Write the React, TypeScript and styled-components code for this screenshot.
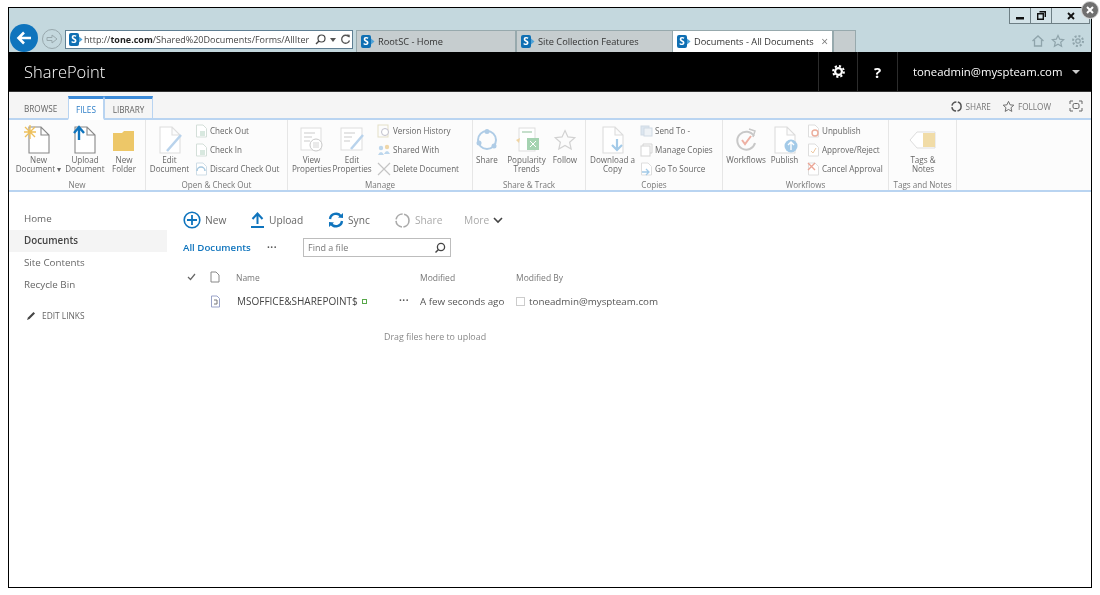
import React from "react";
import styled, { createGlobalStyle } from "styled-components";

const Global = createGlobalStyle`
  html, body { margin: 0; padding: 0; background: #fff; overflow: hidden; }
  body { font-family: "Open Sans", "Noto Sans", "Liberation Sans", sans-serif; color: #555; }
  svg { display: block; flex: none; }
`;

const Window = styled.div`
  position: relative;
  box-sizing: border-box;
  width: 1084px;
  height: 581px;
  margin: 7px 0 0 8px;
  border: 1px solid #000;
  background: #fff;
  display: flex;
  flex-direction: column;
`;
const Soft = styled.div`
  display: flex;
  flex-direction: column;
  flex: 1;
  filter: blur(0.35px);
`;
const Chrome = styled.div`
  background: #c4d8de;
  height: 44px;
  display: flex;
  flex-direction: column;
`;
const CaptionBar = styled.div`
  height: 21px;
  display: flex;
  justify-content: flex-end;
  align-items: flex-start;
`;
const WinControl = styled.div<{ $w: number }>`
  width: ${(p) => p.$w}px;
  height: 16px;
  box-sizing: border-box;
  border: 1px solid #6e7f85;
  border-top: none;
  border-left-width: ${(p) => (p.$w === 22 ? 1 : 0)}px;
  background: #d4e3e8;
  display: flex;
  align-items: center;
  justify-content: center;
  font-weight: 700;
  font-size: 11px;
  color: #111;
`;
const CloseBadge = styled.div`
  position: absolute;
  top: -7px;
  right: -8px;
  width: 16px;
  height: 16px;
  border-radius: 50%;
  background: #6f6f6f;
  border: 1px solid #d8d8d8;
  color: #fff;
  display: flex;
  align-items: center;
  justify-content: center;
  z-index: 2;
`;
const NavBar = styled.div`
  height: 23px;
  display: flex;
  align-items: stretch;
`;
const BackButton = styled.div`
  width: 28px;
  height: 28px;
  margin: -5px 0 0 1px;
  border-radius: 50%;
  background: #0f74bd;
  display: flex;
  align-items: center;
  justify-content: center;
  flex: none;
`;
const ForwardButton = styled.div`
  width: 20px;
  height: 20px;
  margin: 0 0 0 4px;
  border-radius: 50%;
  border: 1px solid #98a8ad;
  box-sizing: border-box;
  display: flex;
  align-items: center;
  justify-content: center;
  flex: none;
`;
const AddressBar = styled.div`
  width: 288px;
  height: 19px;
  margin: 1px 0 0 3px;
  box-sizing: border-box;
  border: 1px solid #5f7f93;
  background: #fff;
  display: flex;
  align-items: center;
  padding: 0 3px;
  gap: 4px;
  font-size: 9px;
  color: #444;
  flex: none;
  white-space: nowrap;
`;
const Url = styled.span`
  flex: none;
  width: 227px;
  margin-left: -3px;
  b { color: #222; }
`;
const TabStrip = styled.div`
  display: flex;
  margin-left: 3px;
  flex: none;
`;
const BrowserTab = styled.div<{ $w: number; $active?: boolean }>`
  width: ${(p) => p.$w}px;
  box-sizing: border-box;
  margin-top: 1px;
  padding: 0 4px 1px;
  border: 1px solid #97a9ad;
  border-bottom: none;
  border-left-width: ${(p) => (p.$active ? 0 : 1)}px;
  background: ${(p) => (p.$active ? "#fff" : "#c6cdcf")};
  display: flex;
  align-items: center;
  gap: 3px;
  font-size: 9.25px;
  color: #333;
  white-space: nowrap;
`;
const TabClose = styled.span`
  margin-left: auto;
  color: #777;
  font-size: 12px;
`;
const ToolIcons = styled.div`
  margin-left: auto;
  display: flex;
  align-items: center;
  gap: 6px;
  padding-right: 6px;
`;
const Header = styled.div`
  height: 40px;
  background: #000;
  display: flex;
  align-items: stretch;
  color: #fff;
  flex: none;
  border-bottom: 1px solid #333;
  box-sizing: border-box;
`;
const Brand = styled.div`
  flex: 1;
  padding-left: 15px;
  font-size: 16.5px;
  font-weight: 300;
  line-height: 39px;
`;
const HeaderCell = styled.div<{ $w: number }>`
  width: ${(p) => p.$w}px;
  border-left: 1px solid #2c2c2c;
  display: flex;
  align-items: center;
  justify-content: center;
  box-sizing: border-box;
  font-weight: 700;
  font-size: 15px;
`;
const UserCell = styled.div`
  width: 194px;
  border-left: 1px solid #2c2c2c;
  box-sizing: border-box;
  display: flex;
  align-items: center;
  padding-left: 15px;
  font-size: 11.35px;
  gap: 10px;
`;
const Caret = styled.span`
  width: 0;
  height: 0;
  border: 4px solid transparent;
  border-top-color: #ccc;
  border-left-width: 4.5px;
  border-right-width: 4.5px;
  margin-top: 4px;
`;
const RibbonTabs = styled.div`
  height: 28px;
  box-sizing: border-box;
  background: #f5f5f5;
  border-bottom: 2px solid #b9d4f1;
  display: flex;
  align-items: flex-end;
  padding-left: 15px;
  font-size: 8.2px;
  flex: none;
`;
const RibbonTab = styled.div<{ $w: number; $active?: boolean; $on?: boolean }>`
  width: ${(p) => p.$w}px;
  height: 24px;
  margin-bottom: -2px;
  box-sizing: border-box;
  display: flex;
  align-items: center;
  justify-content: ${(p) => (p.$on ? "center" : "flex-start")};
  padding-top: 1px;
  color: ${(p) => (p.$active ? "#2f7fc8" : "#666")};
  background: ${(p) => (p.$active ? "#fff" : "transparent")};
  border-top: ${(p) => (p.$on ? "3px solid #3d8bd8" : "none")};
  border-left: ${(p) => (p.$on ? "1px solid #b9d4f1" : "none")};
  border-right: ${(p) => (p.$on ? "1px solid #b9d4f1" : "none")};
  border-bottom: ${(p) => (p.$active ? "2px solid #fff" : p.$on ? "2px solid #b9d4f1" : "none")};
`;
const TabSpacer = styled.div<{ $w: number }>`
  width: ${(p) => p.$w}px;
`;
const RibbonActions = styled.div`
  margin-left: auto;
  height: 24px;
  display: flex;
  align-items: center;
  font-size: 8.2px;
  gap: 3px;
  padding-right: 8px;
  color: #777;
`;
const Ribbon = styled.div`
  height: 72px;
  box-sizing: border-box;
  border-bottom: 2px solid #b9d4f1;
  background: #fcfcfc;
  display: flex;
  flex: none;
  font-size: 8.1px;
  color: #666;
`;
const Group = styled.div<{ $w: number }>`
  width: ${(p) => p.$w}px;
  box-sizing: border-box;
  border-right: 1px solid #e6e6e6;
  display: flex;
  flex-direction: column;
  align-items: stretch;
`;
const GroupBody = styled.div<{ $pad: number }>`
  flex: 1;
  min-height: 0;
  display: flex;
  padding-left: ${(p) => p.$pad}px;
`;
const GroupLabel = styled.div`
  height: 11px;
  line-height: 11px;
  text-align: center;
  color: #777;
  white-space: nowrap;
`;
const LargeButton = styled.div<{ $w: number }>`
  width: ${(p) => p.$w}px;
  display: flex;
  flex-direction: column;
  align-items: center;
  padding-top: 5px;
  text-align: center;
  line-height: 9px;
  white-space: nowrap;
  flex: none;
`;
const IconSlot = styled.div`
  height: 30px;
  display: flex;
  align-items: center;
  justify-content: center;
`;
const SmallStack = styled.div<{ $ml: number }>`
  margin-left: ${(p) => p.$ml}px;
  padding-top: 1px;
  display: flex;
  flex-direction: column;
`;
const SmallItem = styled.div`
  height: 19px;
  display: flex;
  align-items: center;
  gap: 2px;
  white-space: nowrap;
`;
const Body = styled.div`
  flex: 1;
  display: flex;
  background: #fff;
`;
const Sidebar = styled.div`
  width: 158px;
  padding-top: 16px;
  font-size: 9.8px;
  flex: none;
`;
const NavItem = styled.div<{ $active?: boolean }>`
  height: 22px;
  line-height: 22px;
  padding-left: 15px;
  color: ${(p) => (p.$active ? "#444" : "#666")};
  font-weight: ${(p) => (p.$active ? 600 : 400)};
  background: ${(p) => (p.$active ? "#f4f4f4" : "transparent")};
`;
const EditLinks = styled.div`
  display: flex;
  align-items: center;
  gap: 6px;
  padding: 14px 0 0 17px;
  font-size: 8.4px;
  color: #666;
`;
const Main = styled.div`
  margin-left: 16px;
  flex: 1;
  padding-top: 18px;
`;
const Commands = styled.div`
  height: 20px;
  display: flex;
  align-items: center;
  font-size: 10.2px;
  color: #666;
`;
const Command = styled.div<{ $w: number; $off?: boolean }>`
  width: ${(p) => p.$w}px;
  display: flex;
  align-items: center;
  gap: 4px;
  color: ${(p) => (p.$off ? "#aaa" : "#666")};
  flex: none;
`;
const ViewRow = styled.div`
  display: flex;
  align-items: center;
  height: 19px;
  margin-top: 8px;
  font-size: 9.7px;
`;
const ViewName = styled.div`
  width: 84px;
  color: #0f74bd;
  font-weight: 600;
  white-space: nowrap;
`;
const Dots = styled.span`
  font-weight: 700;
  letter-spacing: 0.5px;
  color: #555;
  font-size: 10px;
  line-height: 10px;
  margin-top: -3px;
`;
const DotsSlot = styled.div`
  width: 36px;
`;
const SearchBox = styled.div`
  width: 148px;
  height: 19px;
  box-sizing: border-box;
  border: 1px solid #bdbdbd;
  display: flex;
  align-items: center;
  justify-content: space-between;
  padding: 0 4px;
  color: #777;
  font-size: 9px;
`;
const ListRow = styled.div<{ $top: number; $h: number }>`
  display: grid;
  grid-template-columns: 24px 29px 184px 96px 1fr;
  align-items: center;
  margin-top: ${(p) => p.$top}px;
  height: ${(p) => p.$h}px;
`;
const HeadCell = styled.div`
  font-size: 8.5px;
  color: #777;
`;
const IconCell = styled.div`
  display: flex;
  padding-left: 4px;
`;
const DocIconCell = styled.div`
  display: flex;
  padding-left: 3px;
`;
const NameCell = styled.div`
  display: flex;
  align-items: center;
  font-size: 10px;
  color: #444;
  white-space: nowrap;
  gap: 4px;
  margin-left: 1px;
`;
const NewMark = styled.span`
  width: 3px;
  height: 3px;
  border: 1.5px solid #58a84a;
  margin-top: 1px;
`;
const RowDots = styled(Dots)`
  margin-left: auto;
  padding-right: 11px;
`;
const DataCell = styled.div`
  font-size: 9.8px;
  color: #555;
  white-space: nowrap;
  display: flex;
  align-items: center;
  gap: 4px;
`;
const Presence = styled.span`
  width: 7px;
  height: 7px;
  border: 1px solid #ccc;
`;
const DropHint = styled.div`
  margin: 19px 0 0 201px;
  font-size: 8.9px;
  color: #888;
`;

const Sp = () => (
  <svg width="14" height="13" viewBox="0 0 14 13">
    <path d="M7 1 L13.5 6.5 L7 12Z" fill="#4fa3d8" />
    <rect x="0" y="0" width="10" height="13" rx="2" fill="#0f6fb3" />
    <text x="5" y="10" fontSize="10" fontWeight="700" fill="#fff" textAnchor="middle" fontFamily="Open Sans">S</text>
  </svg>
);
const Page = ({ c = "#aaa", children, w = 22, h = 28 }: { c?: string; children?: React.ReactNode; w?: number; h?: number }) => (
  <svg width={w + 8} height={h + 2} viewBox="0 0 30 30">
    <path d="M5 2 H17 L25 10 V28 H5 Z M17 2 V10 H25" fill="#fff" stroke={c} strokeWidth="1.1" />
    {children}
  </svg>
);
const Mini = ({ c = "#d4dfd9", children }: { c?: string; children?: React.ReactNode }) => (
  <svg width="13" height="14" viewBox="0 0 13 14">
    <path d="M1.5 1 H8 L11.5 4.5 V13 H1.5 Z" fill="#fff" stroke={c} />
    {children}
  </svg>
);

export default function App() {
  return (
    <>
      <Global />
      <Window>
        <CloseBadge>
          <svg width="8" height="8" viewBox="0 0 8 8"><path d="M1 1 L7 7 M7 1 L1 7" stroke="#fff" strokeWidth="2" /></svg>
        </CloseBadge>
        <Soft>
          <Chrome>
            <CaptionBar>
              <WinControl $w={22}>
                <svg width="8" height="8" viewBox="0 0 8 8"><rect x="0" y="5" width="8" height="2.5" fill="#111" /></svg>
              </WinControl>
              <WinControl $w={21}>
                <svg width="9" height="9" viewBox="0 0 9 9"><path d="M2.5 .7 H8.3 V6 M.7 2.7 H6.3 V8.3 H.7 Z" fill="none" stroke="#111" strokeWidth="1.4" /></svg>
              </WinControl>
              <WinControl $w={38}>
                <svg width="8" height="8" viewBox="0 0 8 8"><path d="M1 1 L7 7 M7 1 L1 7" stroke="#111" strokeWidth="1.8" /></svg>
              </WinControl>
              <TabSpacer $w={1} />
            </CaptionBar>
            <NavBar>
              <BackButton>
                <svg width="16" height="14" viewBox="0 0 16 14"><path d="M15 7 H3 M8 1.5 L2.5 7 L8 12.5" stroke="#fff" strokeWidth="2.6" fill="none" /></svg>
              </BackButton>
              <ForwardButton>
                <svg width="12" height="10" viewBox="0 0 12 10"><path d="M1 3.5 H6 V1 L11 5 L6 9 V6.5 H1 Z" fill="none" stroke="#98a8ad" /></svg>
              </ForwardButton>
              <AddressBar>
                <Sp />
                <Url>http://<b>tone.com</b>/Shared%20Documents/Forms/AllIter</Url>
                <svg width="11" height="11" viewBox="0 0 11 11"><circle cx="6.5" cy="4.5" r="3.5" fill="none" stroke="#444" strokeWidth="1.2" /><path d="M4 7 L1 10" stroke="#444" strokeWidth="1.4" /></svg>
                <svg width="6" height="4" viewBox="0 0 6 4"><path d="M0 0 H6 L3 4Z" fill="#555" /></svg>
                <svg width="11" height="11" viewBox="0 0 11 11"><path d="M9 3 A4 4 0 1 0 9.5 6.5" fill="none" stroke="#555" strokeWidth="1.3" /><path d="M7 .5 L9.7 .8 V3.7Z" fill="#555" /></svg>
              </AddressBar>
              <TabStrip>
                <BrowserTab $w={160}><Sp />RootSC - Home</BrowserTab>
                <BrowserTab $w={157}><Sp />Site Collection Features</BrowserTab>
                <BrowserTab $w={160} $active><Sp />Documents - All Documents<TabClose>×</TabClose></BrowserTab>
                <BrowserTab $w={23} />
              </TabStrip>
              <ToolIcons>
                <svg width="14" height="14" viewBox="0 0 14 14"><path d="M1.5 7 L7 2 L12.5 7 M3.5 6 V12 H10.5 V6" fill="none" stroke="#8fa4ab" strokeWidth="1.3" /></svg>
                <svg width="14" height="14" viewBox="0 0 14 14"><path d="M7 1.5 L8.7 5.2 L12.7 5.6 L9.7 8.3 L10.6 12.3 L7 10.2 L3.4 12.3 L4.3 8.3 L1.3 5.6 L5.3 5.2Z" fill="none" stroke="#8fa4ab" strokeWidth="1.2" /></svg>
                <svg width="14" height="14" viewBox="0 0 14 14"><circle cx="7" cy="7" r="2.2" fill="none" stroke="#8fa4ab" strokeWidth="1.2" /><circle cx="7" cy="7" r="5" fill="none" stroke="#8fa4ab" strokeWidth="2" strokeDasharray="2 1.9" /></svg>
              </ToolIcons>
            </NavBar>
          </Chrome>
          <Header>
            <Brand>SharePoint</Brand>
            <HeaderCell $w={39}>
              <svg width="13" height="13" viewBox="0 0 13 13"><circle cx="6.5" cy="6.5" r="3.4" fill="none" stroke="#fff" strokeWidth="2.2" /><circle cx="6.5" cy="6.5" r="5.4" fill="none" stroke="#fff" strokeWidth="2" strokeDasharray="2.2 2" /></svg>
            </HeaderCell>
            <HeaderCell $w={40}>?</HeaderCell>
            <UserCell>toneadmin@myspteam.com<Caret /></UserCell>
          </Header>
          <RibbonTabs>
            <RibbonTab $w={44}>BROWSE</RibbonTab>
            <RibbonTab $w={36} $active $on>FILES</RibbonTab>
            <RibbonTab $w={49} $on>LIBRARY</RibbonTab>
            <RibbonActions>
              <svg width="13" height="13" viewBox="0 0 13 13"><circle cx="6.5" cy="6.5" r="4.6" fill="none" stroke="#555" strokeWidth="1.5" strokeDasharray="6 1.5" /></svg>
              SHARE
              <TabSpacer $w={5} />
              <svg width="13" height="13" viewBox="0 0 14 14"><path d="M7 1.5 L8.7 5.2 L12.7 5.6 L9.7 8.3 L10.6 12.3 L7 10.2 L3.4 12.3 L4.3 8.3 L1.3 5.6 L5.3 5.2Z" fill="none" stroke="#666" /></svg>
              FOLLOW
              <TabSpacer $w={12} />
              <svg width="14" height="12" viewBox="0 0 14 12"><path d="M1 4 V1 H4 M10 1 H13 V4 M13 8 V11 H10 M4 11 H1 V8" fill="none" stroke="#666" /><rect x="4" y="3.5" width="6" height="5" rx="1.5" fill="none" stroke="#666" /></svg>
            </RibbonActions>
          </RibbonTabs>
          <Ribbon>
            <Group $w={137}>
              <GroupBody $pad={6}>
                <LargeButton $w={47}>
                  <IconSlot>
                    <Page c="#888">
                      <g stroke="#eec05a" strokeWidth="1.3"><path d="M1 2 L11 12 M11 2 L1 12 M6 0 V14 M0 7 H12" /></g>
                    </Page>
                  </IconSlot>
                  New<br />Document ▾
                </LargeButton>
                <LargeButton $w={46}>
                  <IconSlot>
                    <Page c="#888">
                      <path d="M9 15 V3 M4 8 L9 2 L14 8" stroke="#0f74bd" strokeWidth="2.4" fill="none" />
                    </Page>
                  </IconSlot>
                  Upload<br />Document
                </LargeButton>
                <LargeButton $w={32}>
                  <IconSlot>
                    <svg width="24" height="24" viewBox="0 0 24 24"><path d="M1 5 H10 L12 3 H22 V23 H1 Z" fill="#edc768" /></svg>
                  </IconSlot>
                  New<br />Folder
                </LargeButton>
              </GroupBody>
              <GroupLabel>New</GroupLabel>
            </Group>
            <Group $w={142}>
              <GroupBody $pad={4}>
                <LargeButton $w={39}>
                  <IconSlot>
                    <Page c="#dedede"><path d="M12 26 L26 10" stroke="#b9d3ec" strokeWidth="2.5" /></Page>
                  </IconSlot>
                  Edit<br />Document
                </LargeButton>
                <SmallStack $ml={6}>
                  <SmallItem><Mini><rect x="5" y="7" width="5" height="5" fill="#d8e8df" /></Mini>Check Out</SmallItem>
                  <SmallItem><Mini><rect x="5" y="7" width="5" height="5" fill="#d8e8df" /></Mini>Check In</SmallItem>
                  <SmallItem><Mini c="#cfdde6"><path d="M2 9 A4 4 0 0 1 10 9" fill="none" stroke="#a8c9e0" strokeWidth="1.5" /></Mini>Discard Check Out</SmallItem>
                </SmallStack>
              </GroupBody>
              <GroupLabel>Open &amp; Check Out</GroupLabel>
            </Group>
            <Group $w={185}>
              <GroupBody $pad={4}>
                <LargeButton $w={39}>
                  <IconSlot>
                    <svg width="24" height="26" viewBox="0 0 24 26"><rect x="1" y="1" width="20" height="22" fill="#fff" stroke="#ddd" /><path d="M4 6 H15 M4 10 H12 M4 14 H10" stroke="#ddd" strokeWidth="1.5" /><circle cx="16" cy="18" r="6" fill="#fff" stroke="#c8c8c8" /><path d="M13 16 H19 M13 18 H19 M13 20 H19" stroke="#d4d4d4" /></svg>
                  </IconSlot>
                  View<br />Properties
                </LargeButton>
                <LargeButton $w={42}>
                  <IconSlot>
                    <svg width="25" height="26" viewBox="0 0 25 26"><rect x="1" y="1" width="21" height="22" fill="#fff" stroke="#ddd" /><path d="M4 6 H15 M4 10 H12 M4 14 H10" stroke="#ddd" strokeWidth="1.5" /><path d="M11 22 L23 8" stroke="#b9d3ec" strokeWidth="2.5" /></svg>
                  </IconSlot>
                  Edit<br />Properties
                </LargeButton>
                <SmallStack $ml={4}>
                  <SmallItem><svg width="14" height="14" viewBox="0 0 14 14"><rect x="1" y="1" width="10" height="12" fill="none" stroke="#e4dfc8" /><circle cx="8" cy="8" r="3.5" fill="#fff" stroke="#c0c0cc" /></svg>Version History</SmallItem>
                  <SmallItem><svg width="14" height="14" viewBox="0 0 14 14"><circle cx="4" cy="5" r="2.2" fill="#bdd7ed" /><circle cx="10" cy="4" r="2.2" fill="#efd7a9" /><path d="M1 12 Q4 6 7 12Z M7 11 Q10 5 13 11Z" fill="#bdd7ed" /></svg>Shared With</SmallItem>
                  <SmallItem><svg width="14" height="14" viewBox="0 0 14 14"><path d="M1 1 L13 13 M13 1 L1 13" stroke="#c4c4c4" strokeWidth="1.2" /></svg>Delete Document</SmallItem>
                </SmallStack>
              </GroupBody>
              <GroupLabel>Manage</GroupLabel>
            </Group>
            <Group $w={113}>
              <GroupBody $pad={3}>
                <LargeButton $w={22}>
                  <IconSlot>
                    <svg width="24" height="24" viewBox="0 0 24 24"><circle cx="12" cy="12" r="9" fill="none" stroke="#afcce6" strokeWidth="2" /><circle cx="12" cy="3.5" r="2.5" fill="#afcce6" /><circle cx="4" cy="15" r="2.5" fill="#afcce6" /><circle cx="19" cy="18" r="2.5" fill="#afcce6" /></svg>
                  </IconSlot>
                  Share
                </LargeButton>
                <TabSpacer $w={7} />
                <LargeButton $w={43}>
                  <IconSlot>
                    <svg width="26" height="26" viewBox="0 0 26 26"><rect x="5" y="1" width="16" height="23" fill="#fff" stroke="#ddd" /><rect x="8" y="4" width="10" height="2" fill="#c6dfcc" /><path d="M2 13 L6 11 L5 16Z" fill="#f0d4a2" /><rect x="13" y="11" width="12" height="12" fill="#a5d3b1" /><path d="M16 14 L22 20 M22 14 L16 20" stroke="#fff" /></svg>
                  </IconSlot>
                  Popularity<br />Trends
                </LargeButton>
                <TabSpacer $w={2} />
                <LargeButton $w={30}>
                  <IconSlot>
                    <svg width="24" height="24" viewBox="0 0 14 14"><path d="M7 1.5 L8.7 5.2 L12.7 5.6 L9.7 8.3 L10.6 12.3 L7 10.2 L3.4 12.3 L4.3 8.3 L1.3 5.6 L5.3 5.2Z" fill="none" stroke="#d2d2d2" strokeWidth=".7" /></svg>
                  </IconSlot>
                  Follow
                </LargeButton>
              </GroupBody>
              <GroupLabel>Share &amp; Track</GroupLabel>
            </Group>
            <Group $w={137}>
              <GroupBody $pad={4}>
                <LargeButton $w={45}>
                  <IconSlot>
                    <Page c="#dcdcdc"><path d="M19 14 V24 M14 20 L19 25 L24 20" stroke="#a3cae8" strokeWidth="2.2" fill="none" /></Page>
                  </IconSlot>
                  Download a<br />Copy
                </LargeButton>
                <SmallStack $ml={5}>
                  <SmallItem><svg width="13" height="14" viewBox="0 0 13 14"><rect x="1" y="2" width="8" height="9" fill="#dce6f0" stroke="#d0dae4" /><rect x="4" y="4" width="8" height="8" fill="#eef2f6" stroke="#d0dae4" /></svg>Send To -</SmallItem>
                  <SmallItem><svg width="13" height="14" viewBox="0 0 13 14"><rect x="1" y="3" width="9" height="10" fill="#fff" stroke="#d4d4d4" /><path d="M3 3 V1 H12 V10 H10" fill="none" stroke="#d4d4d4" /></svg>Manage Copies</SmallItem>
                  <SmallItem><Mini c="#dedede"><path d="M2 10 H9 M6 7 L9 10 L6 13" stroke="#a3cae8" fill="none" strokeWidth="1.3" /></Mini>Go To Source</SmallItem>
                </SmallStack>
              </GroupBody>
              <GroupLabel>Copies</GroupLabel>
            </Group>
            <Group $w={166}>
              <GroupBody $pad={3}>
                <LargeButton $w={40}>
                  <IconSlot>
                    <svg width="24" height="26" viewBox="0 0 24 26"><path d="M20 9 A9 9 0 1 0 21 16" fill="none" stroke="#c8c8c8" strokeWidth="2" /><path d="M15 2 L21 4 L19 10" fill="none" stroke="#c8c8c8" strokeWidth="1.5" /><path d="M8 13 L11 17 L17 9" fill="none" stroke="#eeb0a3" strokeWidth="2" /></svg>
                  </IconSlot>
                  Workflows
                </LargeButton>
                <LargeButton $w={37}>
                  <IconSlot>
                    <Page c="#dcdcdc"><circle cx="21" cy="21" r="6.5" fill="#a3cae8" /><path d="M21 25 V17 M18 20 L21 17 L24 20" stroke="#fff" strokeWidth="1.4" fill="none" /></Page>
                  </IconSlot>
                  Publish
                </LargeButton>
                <SmallStack $ml={4}>
                  <SmallItem><Mini c="#dedede"><circle cx="8" cy="9" r="3" fill="#fff" stroke="#ecae9c" strokeWidth="1.4" /></Mini>Unpublish</SmallItem>
                  <SmallItem><Mini c="#dedede"><path d="M4 8 L6 10 L9 5" fill="none" stroke="#edc8a2" /></Mini>Approve/Reject</SmallItem>
                  <SmallItem><Mini c="#dedede"><path d="M1 1 L8 8 M8 1 L1 8" stroke="#eca595" strokeWidth="1.4" /></Mini>Cancel Approval</SmallItem>
                </SmallStack>
              </GroupBody>
              <GroupLabel>Workflows</GroupLabel>
            </Group>
            <Group $w={68}>
              <GroupBody $pad={0}>
                <LargeButton $w={68}>
                  <IconSlot>
                    <svg width="28" height="20" viewBox="0 0 28 20"><path d="M1 10 L8 2 H26 V18 H8 Z" fill="#fff" stroke="#ddd" /><rect x="14" y="3" width="12" height="14" fill="#f1dca7" /></svg>
                  </IconSlot>
                  Tags &amp;<br />Notes
                </LargeButton>
              </GroupBody>
              <GroupLabel>Tags and Notes</GroupLabel>
            </Group>
          </Ribbon>
          <Body>
            <Sidebar>
              <NavItem>Home</NavItem>
              <NavItem $active>Documents</NavItem>
              <NavItem>Site Contents</NavItem>
              <NavItem>Recycle Bin</NavItem>
              <EditLinks>
                <svg width="10" height="10" viewBox="0 0 10 10"><path d="M1 9 L2 6.5 L7.5 1 L9 2.5 L3.5 8Z" fill="#444" /></svg>
                EDIT LINKS
              </EditLinks>
            </Sidebar>
            <Main>
              <Commands>
                <Command $w={67}>
                  <svg width="18" height="18" viewBox="0 0 18 18"><circle cx="9" cy="9" r="7.8" fill="none" stroke="#0f74bd" strokeWidth="1.6" /><path d="M9 4 V14 M4 9 H14" stroke="#0f74bd" strokeWidth="1.8" /></svg>
                  New
                </Command>
                <Command $w={78}>
                  <svg width="15" height="16" viewBox="0 0 15 16"><path d="M7.5 12 V2 M2.5 7 L7.5 1.5 L12.5 7 M1 15 H14" fill="none" stroke="#0f74bd" strokeWidth="2" /></svg>
                  Upload
                </Command>
                <Command $w={66}>
                  <svg width="16" height="16" viewBox="0 0 16 16"><path d="M2 7 A6 6 0 0 1 13 4.5 M14 9 A6 6 0 0 1 3 11.5" fill="none" stroke="#0f74bd" strokeWidth="2.4" /><path d="M10 5.5 L15 6 L15 1Z M6 10.5 L1 10 L1 15Z" fill="#0f74bd" /></svg>
                  Sync
                </Command>
                <Command $w={70} $off>
                  <svg width="17" height="17" viewBox="0 0 17 17"><circle cx="8.5" cy="8.5" r="6.5" fill="none" stroke="#aaa" strokeWidth="1.6" strokeDasharray="9 1.5" /></svg>
                  Share
                </Command>
                <Command $w={50} $off>
                  More
                  <svg width="10" height="7" viewBox="0 0 10 7"><path d="M1 1 L5 5 L9 1" fill="none" stroke="#444" strokeWidth="1.6" /></svg>
                </Command>
              </Commands>
              <ViewRow>
                <ViewName>All Documents</ViewName>
                <DotsSlot><Dots>···</Dots></DotsSlot>
                <SearchBox>
                  Find a file
                  <svg width="12" height="12" viewBox="0 0 12 12"><circle cx="7" cy="5" r="3.6" fill="none" stroke="#444" strokeWidth="1.3" /><path d="M4.5 7.5 L1.5 10.5" stroke="#444" strokeWidth="1.5" /></svg>
                </SearchBox>
              </ViewRow>
              <ListRow $top={10} $h={20}>
                <IconCell>
                  <svg width="9" height="8" viewBox="0 0 9 8"><path d="M1 4 L3.5 6.5 L8 1" fill="none" stroke="#666" strokeWidth="1.2" /></svg>
                </IconCell>
                <DocIconCell>
                  <svg width="10" height="12" viewBox="0 0 10 12"><path d="M1 1 H6 L9 4 V11 H1 Z" fill="none" stroke="#888" /></svg>
                </DocIconCell>
                <HeadCell>Name</HeadCell>
                <HeadCell>Modified</HeadCell>
                <HeadCell>Modified By</HeadCell>
              </ListRow>
              <ListRow $top={4} $h={20}>
                <span />
                <DocIconCell>
                  <svg width="11" height="13" viewBox="0 0 11 13"><path d="M1.5 1 H7 L9.5 3.5 V12 H1.5 Z" fill="#fff" stroke="#9aa3c8" /><path d="M4 5 H7 V9 H4" fill="none" stroke="#777" /></svg>
                </DocIconCell>
                <NameCell>MSOFFICE&amp;SHAREPOINT$<NewMark /><RowDots>···</RowDots></NameCell>
                <DataCell>A few seconds ago</DataCell>
                <DataCell><Presence />toneadmin@myspteam.com</DataCell>
              </ListRow>
              <DropHint>Drag files here to upload</DropHint>
            </Main>
          </Body>
        </Soft>
      </Window>
    </>
  );
}
